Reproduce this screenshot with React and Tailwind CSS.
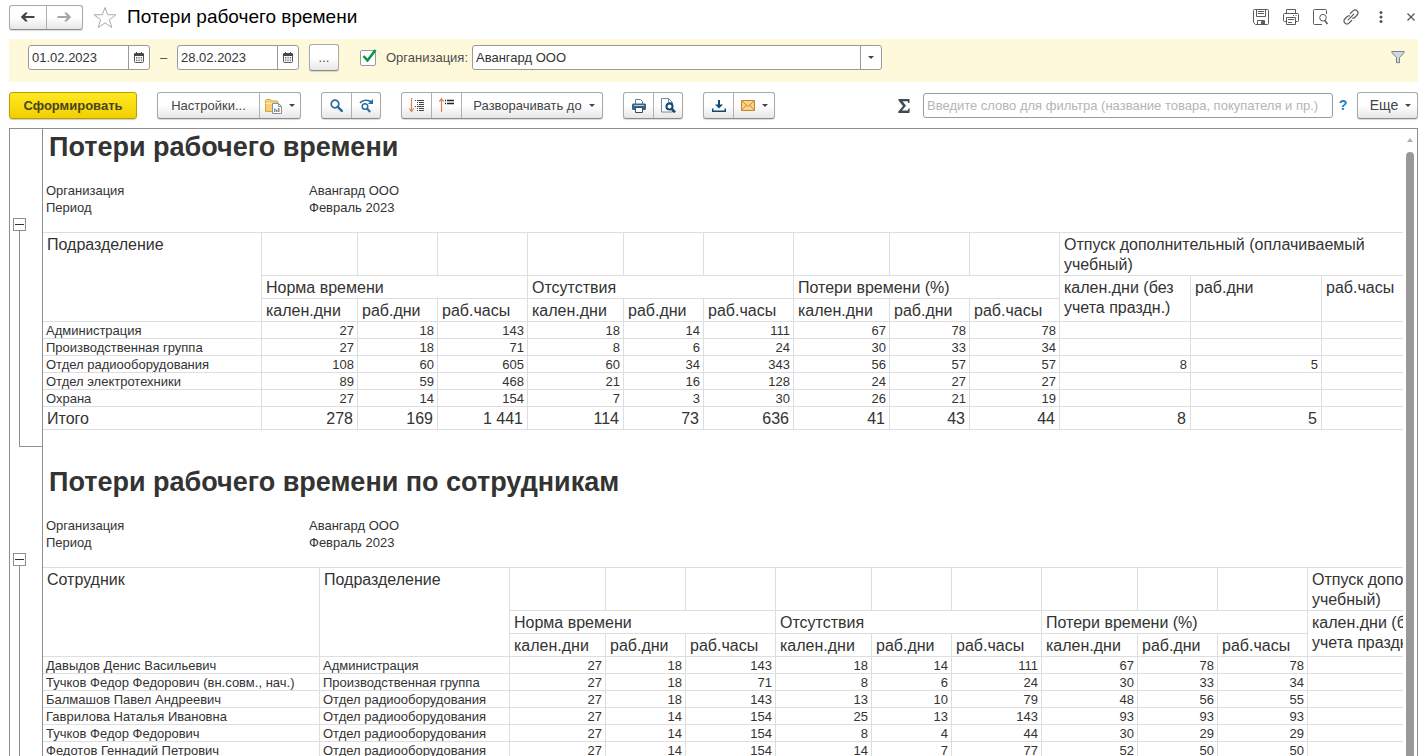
import clsx from 'clsx';

const summaryRows = [
  ['Администрация', 27, 18, 143, 18, 14, 111, 67, 78, 78, '', '', ''],
  ['Производственная группа', 27, 18, 71, 8, 6, 24, 30, 33, 34, '', '', ''],
  ['Отдел радиооборудования', 108, 60, 605, 60, 34, 343, 56, 57, 57, 8, 5, ''],
  ['Отдел электротехники', 89, 59, 468, 21, 16, 128, 24, 27, 27, '', '', ''],
  ['Охрана', 27, 14, 154, 7, 3, 30, 26, 21, 19, '', '', ''],
];

const summaryTotal = ['Итого', 278, 169, '1 441', 114, 73, 636, 41, 43, 44, 8, 5, ''];

const employeeRows = [
  ['Давыдов Денис Васильевич', 'Администрация', 27, 18, 143, 18, 14, 111, 67, 78, 78, '', '', ''],
  ['Тучков Федор Федорович (вн.совм., нач.)', 'Производственная группа', 27, 18, 71, 8, 6, 24, 30, 33, 34, '', '', ''],
  ['Балмашов Павел Андреевич', 'Отдел радиооборудования', 27, 18, 143, 13, 10, 79, 48, 56, 55, '', '', ''],
  ['Гаврилова Наталья Ивановна', 'Отдел радиооборудования', 27, 14, 154, 25, 13, 143, 93, 93, 93, '', '', ''],
  ['Тучков Федор Федорович', 'Отдел радиооборудования', 27, 14, 154, 8, 4, 44, 30, 29, 29, '', '', ''],
  ['Федотов Геннадий Петрович', 'Отдел радиооборудования', 27, 14, 154, 14, 7, 77, 52, 50, 50, '', '', ''],
];

const groups = ['Норма времени', 'Отсутствия', 'Потери времени (%)'];
const units = ['кален.дни', 'раб.дни', 'раб.часы'];

const CELL = 'border-r border-b border-[#dedede]';
const HEAD = 'border-r border-b border-[#dedede] px-1 pt-[2px] pb-0 text-left align-top font-normal text-base leading-5';

/* Buttons */

function Group({ children }) {
  return (
    <div className="flex h-[27px] shrink-0 divide-x divide-[#b0b0b0] overflow-hidden rounded-[3px] border border-[#a9a9a9] border-b-[#8c8c8c] bg-gradient-to-b from-white from-50% to-[#e6e6e6] shadow-[0_1px_1px_rgba(0,0,0,0.15)]">
      {children}
    </div>
  );
}

function ToolButton({ label, className, children }) {
  return (
    <button type="button" aria-label={label} className={clsx('flex items-center justify-center', className)}>
      {children}
    </button>
  );
}

function Caret() {
  return (
    <svg className="h-[3px] w-[6px] shrink-0" viewBox="0 0 6 3" fill="#444">
      <path d="M0 0h6L3 3z" />
    </svg>
  );
}

/* Icons */

function ArrowIcon({ className }) {
  return (
    <svg className={clsx('h-3 w-[15px]', className)} viewBox="0 0 15 12" fill="currentColor">
      <path d="M14.500 4.900v2.200H5.200l2.600 3.400H5.300L.8 6l4.500-4.500h2.500L5.200 4.900z" />
    </svg>
  );
}

function StarIcon() {
  return (
    <svg className="h-[23px] w-[24px]" viewBox="0 0 24 23" fill="#fff" stroke="#a8adb3" strokeWidth="1">
      <path d="M12 1.500l2.700 7.200 8.300.1-6.600 4.900 2.400 7.800L12 16.900l-6.800 4.600 2.400-7.800L1 8.800l8.300-.1z" />
    </svg>
  );
}

function CalendarIcon() {
  return (
    <svg className="h-[11px] w-[10px]" viewBox="0 0 10 11">
      <rect x=".5" y="1.500" width="9" height="9" rx="1" fill="#fff" stroke="#555" />
      <path d="M0 1.500h10V4H0z" fill="#444" />
      <path d="M2.500 0v2M7.500 0v2" stroke="#444" />
      <path d="M2 5.500h1.300M4.400 5.500h1.300M6.800 5.500h1.300M2 7h1.300M4.400 7h1.300M6.800 7h1.300M2 8.600h1.300M4.400 8.600h1.300M6.800 8.600h1.300" stroke="#555" strokeWidth=".9" />
    </svg>
  );
}

function SaveIcon() {
  return (
    <svg className="h-4 w-4" viewBox="0 0 16 16" fill="none" stroke="#5c5c5c">
      <path d="M1.500.5h13a1 1 0 011 1v13a1 1 0 01-1 1h-12l-2-2v-12a1 1 0 011-1z" />
      <path d="M3.500.5v7h9v-7M5 2.500h6M5 4.500h6M4.500 15.500v-4h7v4" />
      <path d="M8.500 12.500h2v2.500h-2z" fill="#5c5c5c" />
    </svg>
  );
}

function PrinterOutlineIcon() {
  return (
    <svg className="h-4 w-4" viewBox="0 0 16 16" fill="none" stroke="#5c5c5c">
      <path d="M3.500 4.500v-4h9v4M3.500 12.500h-2a1 1 0 01-1-1v-6a1 1 0 011-1h13a1 1 0 011 1v6a1 1 0 01-1 1h-2" />
      <path d="M3.500 8.500h9v7h-9zM5 10.500h6M5 13.500h4M10 6.500h1M12.500 6.500h1" />
    </svg>
  );
}

function PreviewOutlineIcon() {
  return (
    <svg className="h-4 w-4" viewBox="0 0 16 16" fill="none" stroke="#5c5c5c">
      <path d="M13.500 5V1.500a1 1 0 00-1-1h-11a1 1 0 00-1 1v13a1 1 0 001 1H9" />
      <circle cx="10" cy="8.700" r="3.300" />
      <path d="M11.800 11.500l2.700 3.500" strokeWidth="1.600" />
    </svg>
  );
}

function LinkIcon() {
  return (
    <svg className="h-4 w-4" viewBox="0 0 16 16" fill="none" stroke="#5c5c5c" strokeWidth="1.200" strokeLinecap="round">
      <path d="M5.200 10.800l5.600-5.600" />
      <path d="M7.300 4.500l2.700-2.700a2.800 2.800 0 014 0l.2.200a2.800 2.800 0 010 4l-2.500 2.500a2.500 2.500 0 01-2.200.7" />
      <path d="M8.700 11.500L6 14.200a2.800 2.800 0 01-4 0l-.2-.2a2.800 2.800 0 010-4l2.500-2.500a2.500 2.500 0 012.200-.7" />
    </svg>
  );
}

function FunnelIcon() {
  return (
    <svg className="h-[13px] w-[14px]" viewBox="0 0 14 13" fill="#cfd8de" stroke="#77838c">
      <path d="M.8.5h12.400v1L8.500 6.500v5.200H5.500V6.500L.8 1.500z" />
    </svg>
  );
}

function FolderReportIcon() {
  return (
    <svg className="h-4 w-[17px]" viewBox="0 0 17 16">
      <path d="M.5 13.500V2.500l1-1h4l1 1.500h5.500l1 1v9.500z" fill="#f6cf78" stroke="#d9a23c" />
      <path d="M.5 5.500h12.500" stroke="#fbe9bd" />
      <path d="M7.500 5.500h6l3 3v7h-9z" fill="#fff" stroke="#7c93a8" />
      <path d="M13.500 5.500v3h3" fill="none" stroke="#7c93a8" />
      <path d="M9.800 14v-3.500" stroke="#4a84b8" strokeWidth="1.300" />
      <path d="M11.800 14v-2.500" stroke="#3ba35a" strokeWidth="1.300" />
      <path d="M13.800 14v-4" stroke="#d5533f" strokeWidth="1.300" />
    </svg>
  );
}

function SearchIcon() {
  return (
    <svg className="h-[13px] w-[13px]" viewBox="0 0 13 13" fill="none" stroke="#2b6c9e">
      <circle cx="5" cy="5" r="3.800" strokeWidth="1.700" />
      <path d="M7.800 7.800l4 4" strokeWidth="2.400" strokeLinecap="round" />
    </svg>
  );
}

function SearchNextIcon() {
  return (
    <svg className="h-[14px] w-[15px]" viewBox="0 0 15 14" fill="none" stroke="#2b6c9e">
      <path d="M1 4C3.500.7 9 .3 12.500 3" strokeWidth="1.600" />
      <path d="M14 0v5H9z" fill="#2b6c9e" stroke="none" />
      <circle cx="6" cy="7.500" r="2.800" strokeWidth="1.500" />
      <path d="M8 9.500l3.200 3.500" strokeWidth="2.100" />
    </svg>
  );
}

function ExpandIcon() {
  return (
    <svg className="h-[15px] w-[16px]" viewBox="0 0 16 15" fill="none">
      <path d="M2.500 0v13.500M.3 10.500l2.200 3 2.200-3" stroke="#e08050" strokeWidth="1.200" />
      <path d="M6 2.500h1M8 2.500h7M8 4.500h1M10 4.500h5M8 6.500h1M10 6.500h5M6 8.500h1M8 8.500h7M8 10.500h1M10 10.500h5M8 12.500h1M10 12.500h5" stroke="#444" />
    </svg>
  );
}

function CollapseIcon() {
  return (
    <svg className="h-[15px] w-[16px]" viewBox="0 0 16 15" fill="none">
      <path d="M2.500 14V.7M.3 3.700l2.200-3 2.200 3" stroke="#e08050" strokeWidth="1.200" />
      <path d="M6 2.500h1M8 2.500h7M6 5.500h1M8 5.500h7" stroke="#222" strokeWidth="1.400" />
    </svg>
  );
}

function PrinterIcon() {
  return (
    <svg className="h-[14px] w-[14px]" viewBox="0 0 14 14">
      <path d="M3.500 5V.5h5l2 2V5" fill="#fff" stroke="#5b7d99" />
      <rect x="0" y="4.500" width="14" height="6.500" rx="1.200" fill="#3a6487" />
      <path d="M2 6.500h10" stroke="#b9cbd9" />
      <path d="M3.500 8.500h7v5h-7z" fill="#fff" stroke="#234f73" />
    </svg>
  );
}

function PreviewIcon() {
  return (
    <svg className="h-[15px] w-[15px]" viewBox="0 0 15 15">
      <path d="M.5.500h7l4 4v9.500H.5z" fill="#fff" stroke="#6d8aa3" />
      <path d="M7.500.5v4h4" fill="none" stroke="#6d8aa3" />
      <circle cx="8.500" cy="8.500" r="3" fill="#fff" stroke="#0f4c75" strokeWidth="2" />
      <path d="M10.500 10.700l3.500 3.600" stroke="#0f4c75" strokeWidth="2.600" />
    </svg>
  );
}

function DownloadIcon() {
  return (
    <svg className="h-3 w-[14px]" viewBox="0 0 14 12" fill="#0f4c75">
      <path d="M6 0h2v4.500h3L7 8.500 3 4.500h3z" />
      <path d="M0 8.500h1.500v2h11v-2H14V12H0z" />
    </svg>
  );
}

function MailIcon() {
  return (
    <svg className="h-[11px] w-[14px]" viewBox="0 0 14 11" fill="#f9d48a" stroke="#c58427">
      <path d="M.5.500h13v10H.5z" />
      <path d="M.7.800L7 6.500 13.300.800M.7 10.200l4.500-5M13.300 10.200l-4.500-5" fill="none" strokeWidth=".9" />
    </svg>
  );
}

function SigmaIcon() {
  return (
    <svg className="h-[14px] w-3 shrink-0" viewBox="0 0 12 14" fill="#3f4a54">
      <path d="M.5 0h11v4h-1.300l-.6-1.800H4.500L8 6.800 3.900 11.500h5.900l.8-2h1.200L11.400 14H.3v-1.600l4.700-5.300L.5 1.400z" />
    </svg>
  );
}

/* Filter bar */

function DateField({ label, value }) {
  return (
    <div className="flex h-[25px] w-[122px] shrink-0 overflow-hidden rounded-[3px] border border-[#9a9a9a] bg-white">
      <input aria-label={label} defaultValue={value} className="min-w-0 flex-1 px-[3px] text-[13px] text-[#333] outline-none" />
      <ToolButton label="Календарь" className="w-[21px] border-l border-[#9a9a9a]">
        <CalendarIcon />
      </ToolButton>
    </div>
  );
}

function FilterBar() {
  return (
    <div className="mr-[2px] ml-[9px] flex h-[43px] items-center bg-[#fff9db] pt-[5px] pb-[11px] pl-[19px] text-[13px] text-[#4d4d4d]">
      <DateField label="Начало периода" value="01.02.2023" />
      <span className="w-[27px] text-center">–</span>
      <DateField label="Конец периода" value="28.02.2023" />
      <div className="ml-[10px]">
        <Group>
          <ToolButton label="Выбрать период" className="w-7 text-[13px]">...</ToolButton>
        </Group>
      </div>
      <div className="ml-[21px] flex items-center">
        <div className="relative h-4 w-4">
          <input
            id="use-org"
            type="checkbox"
            aria-label="Отбор по организации"
            defaultChecked
            className="block h-4 w-4 appearance-none rounded-[2px] border border-[#9a9a9a] bg-white"
          />
          <svg className="pointer-events-none absolute -top-px left-[2px] h-[14px] w-[15px]" viewBox="0 0 15 14" fill="none" stroke="#0d9648" strokeWidth="2.600">
            <path d="M1.500 7l4 4.500L13.500 1" />
          </svg>
        </div>
        <label htmlFor="org" className="ml-[10px] w-[86px]">Организация:</label>
      </div>
      <div className="flex h-[25px] w-[410px] items-center overflow-hidden rounded-[3px] border border-[#9a9a9a] bg-white">
        <select id="org" className="h-full flex-1 appearance-none border-r border-[#9a9a9a] px-[3px] text-[13px] text-[#333] outline-none">
          <option>Авангард ООО</option>
        </select>
        <span className="flex w-5 justify-center">
          <Caret />
        </span>
      </div>
      <button type="button" aria-label="Фильтр" className="mr-[13px] ml-auto">
        <FunnelIcon />
      </button>
    </div>
  );
}

function TitleBar() {
  return (
    <header className="flex h-[39px] items-center pr-px pb-[5px] pl-[9px]">
      <div className="flex h-[25px] w-[74px] divide-x divide-[#b0b0b0] rounded-[3px] border border-[#a9a9a9] border-b-[#8c8c8c] bg-gradient-to-b from-white from-50% to-[#e6e6e6] shadow-[0_1px_1px_rgba(0,0,0,0.15)]">
        <ToolButton label="Назад" className="flex-1 text-[#444]">
          <ArrowIcon />
        </ToolButton>
        <ToolButton label="Вперед" className="flex-1 text-[#a6a6a6]">
          <ArrowIcon className="rotate-180" />
        </ToolButton>
      </div>
      <button type="button" aria-label="В избранное" className="ml-[10px]">
        <StarIcon />
      </button>
      <h1 className="ml-[10px] text-[19px] text-black">Потери рабочего времени</h1>
      <div className="ml-auto flex items-center gap-[14px]">
        <button type="button" aria-label="Сохранить"><SaveIcon /></button>
        <button type="button" aria-label="Печать"><PrinterOutlineIcon /></button>
        <button type="button" aria-label="Просмотр"><PreviewOutlineIcon /></button>
        <button type="button" aria-label="Ссылка"><LinkIcon /></button>
        <button type="button" aria-label="Меню" className="flex w-4 justify-center">
          <svg className="h-3 w-1" viewBox="0 0 4 12" fill="#555">
            <circle cx="2" cy="1.500" r="1.500" />
            <circle cx="2" cy="6" r="1.500" />
            <circle cx="2" cy="10.500" r="1.500" />
          </svg>
        </button>
        <button type="button" aria-label="Закрыть" className="flex w-4 justify-center">
          <svg className="h-2 w-2" viewBox="0 0 8 8" stroke="#555" strokeWidth="1.200">
            <path d="M.5.500l7 7M7.500.500l-7 7" />
          </svg>
        </button>
      </div>
    </header>
  );
}

function Toolbar() {
  return (
    <div className="mt-[10px] mr-[2px] mb-[9px] ml-[9px] flex items-center gap-5 text-[13px] text-[#444]">
      <button
        type="button"
        className="h-[27px] w-32 shrink-0 rounded-[3px] border border-[#b89f00] bg-gradient-to-b from-[#ffe81f] to-[#f2d000] text-[13px] font-bold text-[#4a4420] shadow-[0_1px_1px_rgba(0,0,0,0.2)]"
      >
        Сформировать
      </button>
      <Group>
        <ToolButton className="w-[102px]">Настройки...</ToolButton>
        <ToolButton label="Варианты отчета" className="w-10 gap-[7px]">
          <FolderReportIcon />
          <Caret />
        </ToolButton>
      </Group>
      <Group>
        <ToolButton label="Найти" className="w-[30px]"><SearchIcon /></ToolButton>
        <ToolButton label="Найти далее" className="w-7"><SearchNextIcon /></ToolButton>
      </Group>
      <Group>
        <ToolButton label="Развернуть группы" className="w-[30px]"><ExpandIcon /></ToolButton>
        <ToolButton label="Свернуть группы" className="w-[30px]"><CollapseIcon /></ToolButton>
        <ToolButton className="w-[140px] gap-[7px] pl-1">
          Разворачивать до
          <Caret />
        </ToolButton>
      </Group>
      <Group>
        <ToolButton label="Печать" className="w-[30px]"><PrinterIcon /></ToolButton>
        <ToolButton label="Предварительный просмотр" className="w-7"><PreviewIcon /></ToolButton>
      </Group>
      <Group>
        <ToolButton label="Сохранить в файл" className="w-[30px]"><DownloadIcon /></ToolButton>
        <ToolButton label="Отправить по почте" className="w-10 gap-[7px]">
          <MailIcon />
          <Caret />
        </ToolButton>
      </Group>
      <div className="ml-auto flex items-center">
        <button type="button" aria-label="Сумма"><SigmaIcon /></button>
        <input
          type="text"
          aria-label="Фильтр по слову"
          placeholder="Введите слово для фильтра (название товара, покупателя и пр.)"
          className="ml-[13px] h-[25px] w-[410px] rounded-[3px] border border-[#9a9a9a] bg-white px-[3px] text-[13px] outline-none placeholder:text-[#b5b5b5]"
        />
        <a href="#help" className="w-6 pr-1 text-center text-[14px] font-bold text-[#1a7fc4]">?</a>
        <Group>
          <ToolButton className="w-[59px] gap-[7px] pl-[6px] text-[14px]">
            Еще
            <Caret />
          </ToolButton>
        </Group>
      </div>
    </div>
  );
}

/* Report */

function Columns({ employees }) {
  return (
    <colgroup>
      <col className={employees ? 'w-[277px]' : 'w-[219px]'} />
      {employees && <col className="w-[190px]" />}
      {groups.map((g) => [
        <col key={g + 'd'} className="w-24" />,
        <col key={g + 'w'} className="w-20" />,
        <col key={g + 'h'} className="w-[90px]" />,
      ])}
      <col className="w-[131px]" />
      <col className="w-[131px]" />
      <col className="w-[131px]" />
    </colgroup>
  );
}

function TableHead({ titles }) {
  return (
    <thead>
      <tr className="h-[43px]">
        {titles.map((t) => (
          <th key={t} rowSpan={3} className={HEAD}>{t}</th>
        ))}
        {groups.map((g) => units.map((u) => <td key={g + u} className={CELL} />))}
        <th colSpan={3} className={HEAD}>
          Отпуск дополнительный (оплачиваемый
          <br />
          учебный)
        </th>
      </tr>
      <tr className="h-[23px]">
        {groups.map((g) => (
          <th key={g} colSpan={3} className={HEAD}>{g}</th>
        ))}
        <th rowSpan={2} className={HEAD}>
          кален.дни (без
          <br />
          учета праздн.)
        </th>
        <th rowSpan={2} className={HEAD}>раб.дни</th>
        <th rowSpan={2} className={HEAD}>раб.часы</th>
      </tr>
      <tr className="h-[23px]">
        {groups.map((g) => units.map((u) => <th key={g + u} className={HEAD}>{u}</th>))}
      </tr>
    </thead>
  );
}

function ReportTable({ titles, rows, total }) {
  const names = titles.length;
  return (
    <table className={clsx(
      'mt-4 table-fixed border-separate border-spacing-0 border-t border-[#dedede] whitespace-nowrap',
      names === 2 ? 'w-[1658px]' : 'w-[1410px]',
    )}>
      <Columns employees={names === 2} />
      <TableHead titles={titles} />
      <tbody>
        {rows.map((row) => (
          <tr key={row[0]} className="text-[13px] leading-[15px]">
            {row.map((v, i) => (
              <td key={i} className={clsx(CELL, 'h-[17px] px-[3px] pt-px pb-0', i >= names && 'text-right')}>{v}</td>
            ))}
          </tr>
        ))}
        {total && (
          <tr className="text-base leading-5">
            {total.map((v, i) => (
              <td key={i} className={clsx(CELL, 'h-[23px] px-1 pt-[2px] pb-0', i >= names && 'text-right')}>{v}</td>
            ))}
          </tr>
        )}
      </tbody>
    </table>
  );
}

function Section({ title, children }) {
  return (
    <section className="flex">
      <div className="flex w-8 shrink-0 flex-col pt-[89px] pb-[17px] pl-[3px]">
        <button type="button" aria-label="Свернуть" className="flex h-[13px] w-[13px] shrink-0 items-center justify-center border border-[#8f8f8f] bg-white">
          <span className="h-px w-[9px] bg-[#333]" />
        </button>
        <div className="ml-[6px] flex-1 border-b border-l border-[#8f8f8f]" />
      </div>
      <div className="min-w-0 flex-1 overflow-hidden border-l border-[#8f8f8f] pb-[34px]">
        <h2 className="pl-[6px] text-[27px] leading-9 font-bold">{title}</h2>
        <dl className="mt-[17px] grid grid-cols-[263px_1fr] pl-[3px] text-[13px] leading-[17px]">
          <dt>Организация</dt>
          <dd>Авангард ООО</dd>
          <dt>Период</dt>
          <dd>Февраль 2023</dd>
        </dl>
        {children}
      </div>
    </section>
  );
}

export default function App() {
  return (
    <div className="flex h-screen flex-col overflow-hidden bg-white font-['Liberation_Sans',Arial,sans-serif] text-[#333]">
      <TitleBar />
      <FilterBar />
      <Toolbar />
      <main className="mr-[2px] ml-[9px] flex min-h-0 flex-1 border border-b-0 border-[#8f8f8f]">
        <div className="min-w-0 flex-1 overflow-hidden">
          <Section title="Потери рабочего времени">
            <ReportTable titles={['Подразделение']} rows={summaryRows} total={summaryTotal} />
          </Section>
          <Section title="Потери рабочего времени по сотрудникам">
            <ReportTable titles={['Сотрудник', 'Подразделение']} rows={employeeRows} />
          </Section>
        </div>
        <div className="flex w-[14px] shrink-0 flex-col items-center pt-[9px]">
          <svg className="h-[4px] w-[6px] shrink-0" viewBox="0 0 6 4" fill="#b0b0b0">
            <path d="M0 4h6L3 0z" />
          </svg>
          <div className="mt-[10px] w-2 flex-1 rounded-t bg-[#999]" />
        </div>
      </main>
    </div>
  );
}
